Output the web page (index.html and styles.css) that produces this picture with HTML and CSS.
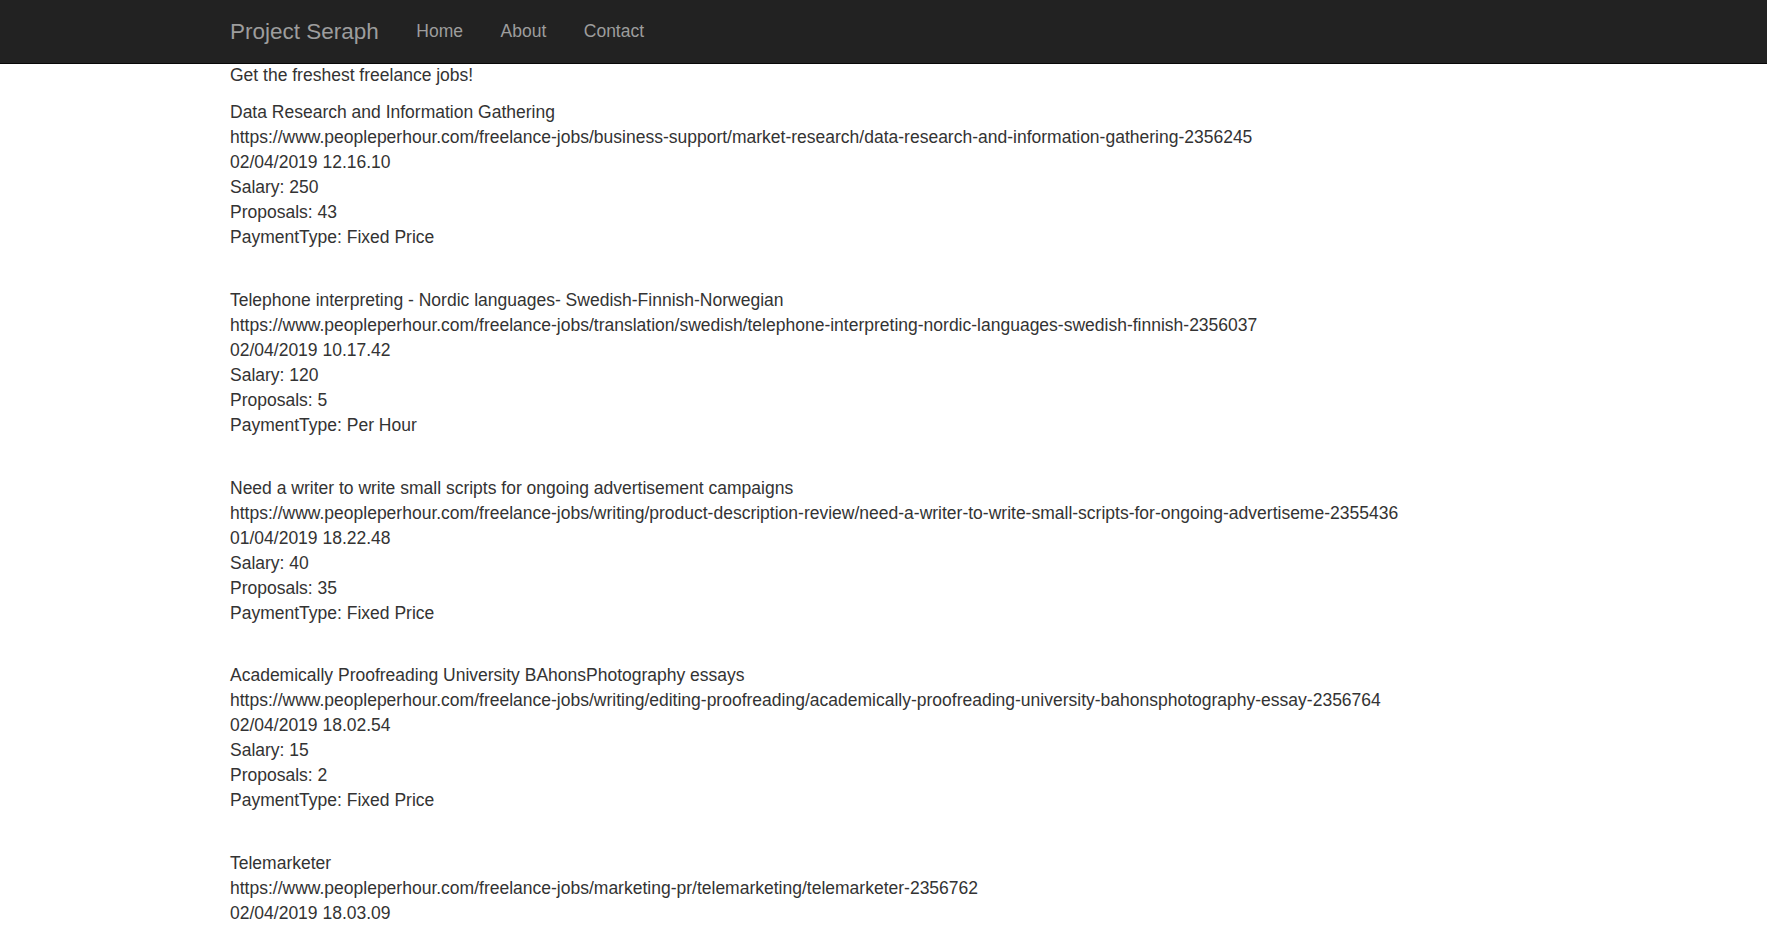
FILE: index.html
```html
<!DOCTYPE html>
<html lang="en">
<head>
<meta charset="utf-8">
<title>Project Seraph</title>
<link rel="stylesheet" href="styles.css">
</head>
<body>
<nav class="navbar">
  <div class="container navbar-inner">
    <a class="brand" href="#">Project Seraph</a>
    <ul class="nav">
      <li><a href="#">Home</a></li>
      <li><a href="#">About</a></li>
      <li><a href="#">Contact</a></li>
    </ul>
  </div>
</nav>
<main class="container body-content">
  <p class="lead-line">Get the freshest freelance jobs!</p>

  <div class="job">
    <div>Data Research and Information Gathering</div>
    <div>https://www.peopleperhour.com/freelance-jobs/business-support/market-research/data-research-and-information-gathering-2356245</div>
    <div>02/04/2019 12.16.10</div>
    <div>Salary: 250</div>
    <div>Proposals: 43</div>
    <div>PaymentType: Fixed Price</div>
  </div>

  <div class="job">
    <div>Telephone interpreting - Nordic languages- Swedish-Finnish-Norwegian</div>
    <div>https://www.peopleperhour.com/freelance-jobs/translation/swedish/telephone-interpreting-nordic-languages-swedish-finnish-2356037</div>
    <div>02/04/2019 10.17.42</div>
    <div>Salary: 120</div>
    <div>Proposals: 5</div>
    <div>PaymentType: Per Hour</div>
  </div>

  <div class="job">
    <div>Need a writer to write small scripts for ongoing advertisement campaigns</div>
    <div>https://www.peopleperhour.com/freelance-jobs/writing/product-description-review/need-a-writer-to-write-small-scripts-for-ongoing-advertiseme-2355436</div>
    <div>01/04/2019 18.22.48</div>
    <div>Salary: 40</div>
    <div>Proposals: 35</div>
    <div>PaymentType: Fixed Price</div>
  </div>

  <div class="job">
    <div>Academically Proofreading University BAhonsPhotography essays</div>
    <div>https://www.peopleperhour.com/freelance-jobs/writing/editing-proofreading/academically-proofreading-university-bahonsphotography-essay-2356764</div>
    <div>02/04/2019 18.02.54</div>
    <div>Salary: 15</div>
    <div>Proposals: 2</div>
    <div>PaymentType: Fixed Price</div>
  </div>

  <div class="job job-last">
    <div>Telemarketer</div>
    <div>https://www.peopleperhour.com/freelance-jobs/marketing-pr/telemarketing/telemarketer-2356762</div>
    <div>02/04/2019 18.03.09</div>
  </div>
</main>
</body>
</html>
```

FILE: styles.css
```css
* {
  box-sizing: border-box;
}

html, body {
  margin: 0;
  padding: 0;
}

body {
  font-family: "Liberation Sans", Arial, Helvetica, sans-serif;
  font-size: 17.5px;
  line-height: 25px;
  color: #333333;
  background: #ffffff;
  padding-top: 62.5px;
}

.container {
  width: 1345px;
  margin: 0 auto;
  padding: 0 19px;
}

.navbar {
  position: fixed;
  top: 0;
  left: 0;
  right: 0;
  height: 63.5px;
  background: #222222;
  border-bottom: 1px solid #080808;
  z-index: 10;
}

.navbar-inner {
  display: flex;
  align-items: flex-start;
}

.brand {
  display: block;
  font-size: 22.5px;
  line-height: 25px;
  padding: 18.75px 18.75px;
  margin-left: -18.75px;
  color: #9d9d9d;
  text-decoration: none;
}

.nav {
  display: flex;
  list-style: none;
  margin: 0;
  padding: 0;
}

.nav a {
  display: block;
  padding: 18.75px 18.75px;
  line-height: 25px;
  color: #9d9d9d;
  text-decoration: none;
}

.lead-line {
  margin: 0 0 12.5px;
}

.job {
  margin-bottom: 37.8px;
}

.job-last {
  margin-bottom: 0;
}
```
